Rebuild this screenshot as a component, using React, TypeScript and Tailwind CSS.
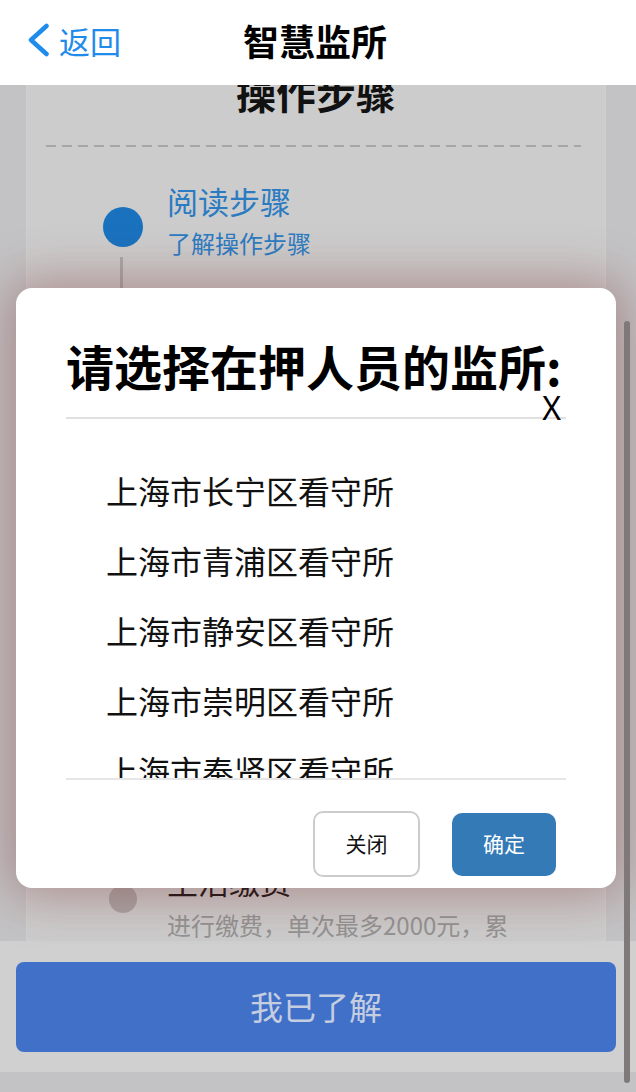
import React from "react";

const font = { fontFamily: '"Noto Sans CJK SC", "Noto Sans", sans-serif' };

const hiddenSteps = [
  { t: "身份认证", s: "完成实名认证" },
  { t: "选择监所", s: "选择在押人员所在监所" },
  { t: "绑定人员", s: "填写在押人员信息" },
  { t: "等待审核", s: "监所审核通过后生效" },
  { t: "账户充值", s: "为在押人员账户充值" },
];

const prisons = [
  "上海市长宁区看守所",
  "上海市青浦区看守所",
  "上海市静安区看守所",
  "上海市崇明区看守所",
  "上海市奉贤区看守所",
  "上海市金山区看守所",
  "上海市松江区看守所",
];

export default function App() {
  return (
    <div
      className="relative h-[1092px] w-full overflow-hidden bg-[#c3c3c5]"
      style={font}
    >
      {/* Header */}
      <div className="relative z-20 grid h-[85px] grid-cols-[1fr_auto_1fr] items-center bg-white pb-[5px]">
        <div className="flex items-center pl-[26px] text-[#1f8ceb]">
          <svg width="24" height="34" viewBox="0 0 24 34" fill="none">
            <path
              d="M20.5 3 L5 17 L20.5 31"
              stroke="#1f8ceb"
              strokeWidth="4.5"
              strokeLinecap="round"
              strokeLinejoin="round"
            />
          </svg>
          <span className="ml-[9px] text-[31px] leading-none">返回</span>
        </div>
        <div className="pr-[6px] text-[36px] font-bold leading-none text-black">
          智慧监所
        </div>
        <div />
      </div>

      {/* Page card (dimmed) */}
      <div className="relative z-0 mx-[26px] mt-[-25px] w-[580px] border-x border-[#d0d0d0] bg-[#cccccc] pb-[120px]">
        <div className="pt-[8px] text-center text-[40px] font-bold leading-[48px] text-[#111]">
          操作步骤
        </div>
        <div className="ml-[19px] mr-[24px] mt-[29px] h-[2px] bg-[repeating-linear-gradient(to_right,#a6a6a6_0px,#a6a6a6_10px,transparent_10px,transparent_16px)]" />

        <div className="ml-[19px] mt-[34px] flex flex-col">
          {/* Step 1 */}
          <div className="flex h-[115px]">
            <div className="ml-[57px] flex w-[40px] flex-col items-center">
              <div className="mt-[26px] h-[40px] w-[40px] rounded-full bg-[#1a72bf]" />
              <div className="mt-[10px] mr-[3px] w-[3px] flex-1 bg-[#a9a9a9]" />
            </div>
            <div className="ml-[24px]">
              <div className="text-[31px] leading-[40px] text-[#2b7bc2]">阅读步骤</div>
              <div className="mt-[6px] text-[24px] leading-[32px] text-[#2b7bc2]">
                了解操作步骤
              </div>
            </div>
          </div>

          {hiddenSteps.map((s) => (
            <div key={s.t} className="flex h-[113px]">
              <div className="ml-[57px] flex w-[40px] flex-col items-center">
                <div className="h-[26px] w-[3px] bg-[#a9a9a9]" />
                <div className="h-[28px] w-[28px] rounded-full bg-[#adadad]" />
                <div className="w-[3px] flex-1 bg-[#a9a9a9]" />
              </div>
              <div className="ml-[24px]">
                <div className="text-[31px] leading-[40px] text-[#111]">{s.t}</div>
                <div className="mt-[9px] text-[24px] leading-[32px] text-[#939393]">{s.s}</div>
              </div>
            </div>
          ))}

          {/* Last step */}
          <div className="flex">
            <div className="ml-[57px] flex w-[40px] flex-col items-center">
              <div className="mt-[24px] h-[28px] w-[28px] rounded-full bg-[#aaa5a5]" />
            </div>
            <div className="ml-[24px] w-[360px]">
              <div className="text-[31px] leading-[40px] text-[#1a1414]">生活缴费</div>
              <div className="mt-[8px] text-[24px] leading-[32px] text-[#939393]">
                进行缴费，单次最多2000元，累计最多5000元
              </div>
            </div>
          </div>
        </div>
      </div>

      {/* Bottom bar */}
      <div className="absolute bottom-0 left-0 right-0 top-[941px] z-10 flex flex-col bg-[#c3c3c5]">
        <div className="h-[131px] bg-[#d0d0d0] pl-[16px] pr-[20px] pt-[21px]">
          <div className="flex h-[90px] items-center justify-center rounded-[8px] bg-[#4170c8] text-[33px] text-[#c5cde0]">
            我已了解
          </div>
        </div>
      </div>

      {/* Scrollbar */}
      <div className="absolute left-[624px] top-[321px] z-40 h-[762px] w-[6px] rounded-full bg-[#7f7979]" />

      {/* Modal */}
      <div className="absolute left-[16px] top-[288px] z-30 flex h-[600px] w-[600px] flex-col rounded-[16px] bg-white px-[50px] shadow-[0_0_50px_8px_rgba(125,50,50,0.4)]">
        <div className="relative border-b-2 border-[#e0e0e0] pb-[24px] pt-[49px]">
          <div className="text-[48px] font-bold leading-[56px] text-black">
            请选择在押人员的监所:
          </div>
          <div
            className="absolute right-[5px] top-[104px] text-[32px] leading-none text-black"
            style={{ fontFamily: '"Noto Sans", sans-serif' }}
          >
            X
          </div>
        </div>
        <div className="h-[359px] overflow-hidden pl-[40px] pt-[36px]">
          {prisons.map((p) => (
            <div key={p} className="flex h-[70px] items-center text-[32px] text-[#111]">
              {p}
            </div>
          ))}
        </div>
        <div className="border-t-2 border-[#e6e6e6]" />
        <div className="mt-[31px] flex h-[66px] items-center justify-end gap-[32px] pr-[10px]">
          <button className="flex h-[66px] w-[107px] items-center justify-center rounded-[10px] border-2 border-[#cccccc] bg-white text-[21px] text-[#111]">
            关闭
          </button>
          <button className="flex h-[63px] w-[104px] items-center justify-center rounded-[10px] bg-[#337ab7] text-[21px] text-white">
            确定
          </button>
        </div>
      </div>
    </div>
  );
}
